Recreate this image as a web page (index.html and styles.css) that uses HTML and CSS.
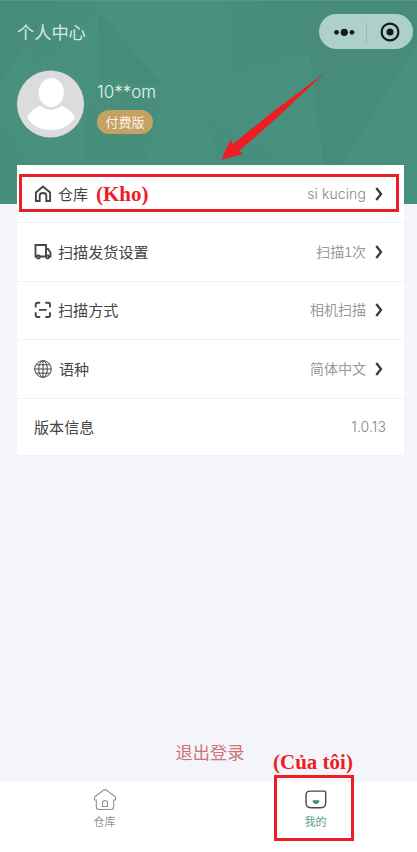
FILE: index.html
```html
<!DOCTYPE html>
<html lang="zh-CN">
<head>
<meta charset="utf-8">
<meta name="viewport" content="width=device-width, initial-scale=1">
<title>个人中心</title>
<link rel="stylesheet" href="styles.css">
</head>
<body>
<div class="app">
  <header class="hero">
    <svg class="hero-pattern" viewBox="0 0 417 204" aria-hidden="true">
      <g fill="#468c79">
        <path d="M0 0H57L0 83z"/>
        <path d="M57 0H93L98 10 27 80V50z" opacity=".5"/>
        <path d="M98 10 163 86 100 79z"/>
        <path d="M262 0H417V45L350 150H322L310 56z"/>
        <path d="M230 0H262L310 56 230 75z" opacity=".35"/>
        <path d="M98 79 163 93 155 130 145 165H84V120z" opacity=".4"/>
        <path d="M205 116 270 150 300 204H213V145z" opacity=".35"/>
        <path d="M0 115 24 150 45 204H0z" opacity=".5"/>
        <path d="M322 150H350L325 204z"/>
      </g>
      <path d="M0 .5H417" stroke="#589783"/>
    </svg>
    <div class="topbar">
      <h1 class="title">个人中心</h1>
      <div class="capsule">
        <svg width="94" height="35" viewBox="0 0 94 35">
          <g fill="#151918"><circle cx="17.5" cy="18.3" r="2.4"/><circle cx="25.3" cy="18.3" r="3.6"/><circle cx="33" cy="18.3" r="2.4"/><circle cx="71" cy="18" r="3.5"/></g>
          <path d="M47.5 8v21" stroke="#97bfb4"/>
          <circle cx="71" cy="18" r="8.400" fill="none" stroke="#151918" stroke-width="2.200"/>
        </svg>
      </div>
    </div>
    <div class="profile">
      <svg class="avatar" width="68" height="68" viewBox="0 0 68 68">
        <circle cx="33.5" cy="34" r="33.500" fill="#dcdcdc"/>
        <path d="M10 47.500C13.500 41.500 17.500 38 23.500 35.800 29.500 41 38.500 41 44.500 35.800 50.500 38 55 41.500 58 47.500 52.500 56 44.500 60 34 60S15.500 56 10 47.500z" fill="#fff"/>
        <ellipse cx="34.300" cy="22.500" rx="12.600" ry="14.500" fill="#fff"/>
      </svg>
      <div class="who">
        <div class="name">10**om</div>
        <span class="badge">付费版</span>
      </div>
    </div>
  </header>

  <main class="card">
    <div class="row">
      <svg class="icon" viewBox="0 0 18 18"><path d="M1.900 7.400 9 1.500 16.100 7.400V16H12.300V10.500Q12.300 8 9 8T5.700 10.500V16H1.900z"/></svg>
      <span class="label">仓库</span><span class="value latin">si kucing</span>
      <svg class="chevron" viewBox="0 0 8 14"><path d="M1.300 1 6 7 1.300 13"/></svg>
    </div>
    <div class="row">
      <svg class="icon" viewBox="0 0 18 18"><path d="M3 13.500H1.500V2H12V13.500H6M12 6H14L16.500 9.500V13.500H15"/><circle cx="4.300" cy="14" r="1.500"/><circle cx="13.600" cy="14" r="1.500"/></svg>
      <span class="label">扫描发货设置</span><span class="value">扫描1次</span>
      <svg class="chevron" viewBox="0 0 8 14"><path d="M1.300 1 6 7 1.300 13"/></svg>
    </div>
    <div class="row">
      <svg class="icon" viewBox="0 0 18 18"><path d="M6.200 1.700H3.500Q1.700 1.700 1.700 3.500V6.500M11.300 1.700H14.200Q16 1.700 16 3.500V6.500M1.700 11.300V14.200Q1.700 16 3.500 16H6.200M16 11.300V14.200Q16 16 14.200 16H11.300M5 8.900H12.700"/></svg>
      <span class="label">扫描方式</span><span class="value">相机扫描</span>
      <svg class="chevron" viewBox="0 0 8 14"><path d="M1.300 1 6 7 1.300 13"/></svg>
    </div>
    <div class="row">
      <svg class="icon globe" viewBox="0 0 18 18"><circle cx="9" cy="9" r="8.300"/><ellipse cx="9" cy="9" rx="4.300" ry="8.300"/><path d="M9 .7V17.300M.7 9H17.300M2 4.800H16M2 13.200H16"/></svg>
      <span class="label">语种</span><span class="value">简体中文</span>
      <svg class="chevron" viewBox="0 0 8 14"><path d="M1.300 1 6 7 1.300 13"/></svg>
    </div>
    <div class="row">
      <span class="label">版本信息</span><span class="value latin">1.0.13</span>
    </div>
  </main>

  <button class="logout">退出登录</button>

  <nav class="tabs">
    <div class="tab">
      <svg width="24" height="24" viewBox="0 0 24 24" fill="none" stroke="#929292" stroke-width="1.100"><path d="M10.800 2Q12 1.300 13.200 2L21.500 8.200Q23.400 10 22.300 12H20.700V18.500Q20.700 21.500 17.700 21.500H6.300Q3.300 21.500 3.300 18.500V12H1.700Q.6 10 2.500 8.200zM9.500 18.500V14.800Q9.500 12.500 12 12.500T14.500 14.800V18.500z"/></svg>
      <span>仓库</span>
    </div>
    <div class="tab active">
      <svg width="24" height="24" viewBox="0 0 24 24"><path d="M6 3.100H20.200Q21.700 3.100 21.700 4.600V14.700Q21.700 19.700 16.700 19.700H7Q2 19.700 2 14.700V7.100Q2 3.100 6 3.100z" fill="none" stroke="#444a4b" stroke-width="1.400"/><path d="M8.500 12.200H15.500Q15 16 12 16T8.500 12.200z" fill="#438e7c"/></svg>
      <span>我的</span>
    </div>
  </nav>

  <div class="mark mark-row"></div>
  <div class="mark mark-tab"></div>
  <div class="note note-row">(Kho)</div>
  <div class="note note-tab">(Của tôi)</div>
  <svg class="arrow" width="106" height="90" viewBox="0 0 106 90"><path d="M104.500 2 55 48.500 19 80 23.500 83 1.300 88.800 10.500 68 12.700 73.300 50 43z" fill="#ee1c25"/></svg>
</div>
</body>
</html>
```
FILE: styles.css
```css
* { box-sizing: border-box; }
body {
  margin: 0;
  background: #f4f5fa;
  font-family: "Noto Sans CJK SC", sans-serif;
}
.app {
  position: relative;
  height: 852px;
  display: flex;
  flex-direction: column;
  overflow: hidden;
}
.hero {
  position: relative;
  flex: none;
  height: 204px;
  padding: 14px 4px 0 17px;
  background: #48917e;
}
.hero-pattern {
  position: absolute;
  inset: 0;
  width: 100%;
  height: 100%;
}
.topbar, .profile { position: relative; display: flex; }
.topbar { justify-content: space-between; height: 35px; }
.title {
  margin: 0;
  font-size: 17.2px;
  font-weight: 400;
  line-height: 35px;
  color: #d6eae3;
}
.capsule {
  width: 94px;
  height: 35px;
  border-radius: 18px;
  background: #add1c8;
}
.capsule svg { display: block; }
.profile { margin-top: 21px; gap: 12px; }
.who { padding-top: 10px; }
.name {
  font-family: Inter, sans-serif;
  font-size: 17px;
  font-weight: 300;
  line-height: 24px;
  color: #e6f3ee;
}
.badge {
  display: block;
  width: 56px;
  height: 24px;
  margin-top: 6px;
  border-radius: 12px;
  background: #c4a264;
  color: #fff0e6;
  font-size: 13px;
  line-height: 23px;
  text-align: center;
}
.card {
  position: relative;
  flex: none;
  width: 387px;
  margin: -39px 0 0 17px;
  background: #fff;
}
.row {
  display: flex;
  align-items: center;
  height: 58.400px;
  padding: 0 21px 0 17px;
  border-bottom: 1px solid #f2f2f3;
}
.row:last-child { height: 57px; padding-right: 18px; }
.icon {
  width: 18px;
  height: 18px;
  margin-right: 6px;
  fill: none;
  stroke: #454748;
  stroke-width: 1.900;
}
.globe { stroke-width: 1; margin-right: 7px; }
.label {
  font-size: 15.100px;
  line-height: 24px;
  padding-bottom: 2px;
  color: #444;
}
.value {
  margin-left: auto;
  font-family: "Liberation Sans", "Noto Sans CJK SC", sans-serif;
  font-size: 14px;
  line-height: 24px;
  color: #999;
}
.latin { font-family: Inter, sans-serif; font-weight: 300; color: #858585; letter-spacing: .1px; }
.chevron {
  width: 8px;
  height: 14px;
  margin-left: 9px;
  fill: none;
  stroke: #393939;
  stroke-width: 2.300;
}
.logout {
  align-self: center;
  margin: auto 0 15px 3px;
  padding: 0;
  border: 0;
  background: none;
  font: 400 17.200px/29px "Noto Sans CJK SC", sans-serif;
  color: #cf7470;
}
.tabs {
  display: flex;
  flex: none;
  height: 71px;
  background: #fff;
}
.tab {
  flex: 1;
  display: flex;
  flex-direction: column;
  align-items: center;
  padding: 7px 0 0 3px;
  font-size: 11px;
  line-height: 18px;
  color: #929292;
}
.tab.active { color: #579f8b; padding-left: 8px; }
.mark { position: absolute; border: 3px solid #ee1c25; }
.mark-row { left: 19px; top: 174px; width: 380px; height: 38px; }
.mark-tab { left: 274px; top: 775px; width: 80px; height: 66px; }
.note {
  position: absolute;
  font: 700 21px/24px "Liberation Serif", serif;
  color: #ee1c25;
  white-space: nowrap;
}
.note-row { left: 96px; top: 182px; }
.note-tab { left: 273px; top: 750px; }
.arrow { position: absolute; left: 220px; top: 71px; }
```
